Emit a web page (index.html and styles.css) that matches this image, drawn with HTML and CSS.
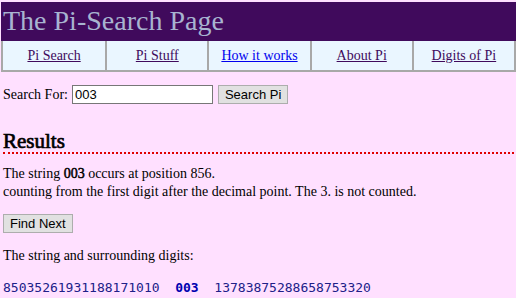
FILE: index.html
```html
<!DOCTYPE html>
<html lang="en">
  <head>
    <meta charset="UTF-8" />
    <title>The Pi-Search Page</title>
    <link rel="stylesheet" href="styles.css">
  </head>
  <body>
    <div class="header">The Pi-Search Page</div>

    <div class="nav">
      <a class="nav-item visited" href="#">Pi Search</a>
      <a class="nav-item visited" href="#">Pi Stuff</a>
      <a class="nav-item" href="#">How it works</a>
      <a class="nav-item visited" href="#">About Pi</a>
      <a class="nav-item visited" href="#">Digits of Pi</a>
    </div>

    <div class="content">
      <form class="search-form">
        <label for="q">Search For:</label>
        <input id="q" class="search-input" type="text" value="003" />
        <button type="button" class="btn">Search Pi</button>
      </form>

      <h2 class="results-title">Results</h2>

      <p class="result-text">
        The string <b>003</b> occurs at position 856.<br />
        counting from the first digit after the decimal point. The 3. is not counted.
      </p>

      <button type="button" class="btn find-btn">Find Next</button>

      <p class="result-text surround">The string and surrounding digits:</p>

      <pre class="digits">85035261931188171010  <b>003</b>  13783875288658753320</pre>
    </div>
  </body>
</html>
```

FILE: styles.css
```css
body {
  margin: 2px 0 0 1px;
  background-color: #ffe0ff;
  font-family: "Liberation Serif", "Times New Roman", serif;
  font-size: 14px;
  color: #000;
}

.header {
  background-color: #400a5c;
  color: #a8b4d0;
  font-size: 28px;
  height: 39px;
  line-height: 38px;
  padding-left: 2px;
}

.nav {
  display: grid;
  grid-template-columns: repeat(5, 1fr);
  background-color: #eaf6ff;
  border: 2px solid #a8a8a8;
  border-top: none;
  height: 29px;
}

.nav-item {
  display: flex;
  align-items: center;
  justify-content: center;
  color: #0000ee;
  font-size: 14px;
  border-left: 2px solid #a8a8a8;
}

.nav-item:first-child {
  border-left: none;
}

.nav-item.visited {
  color: #400a5c;
}

.content {
  padding: 13px 2px 0 2px;
}

.search-form {
  display: flex;
  align-items: center;
  gap: 4px;
  margin: 0;
}

.search-input {
  width: 135px;
  height: 15px;
  padding: 1px 2px;
  border: 1px solid #777;
  font-family: "Liberation Sans", Arial, sans-serif;
  font-size: 13px;
  margin-right: 1px;
}

.btn {
  font-family: "Liberation Sans", Arial, sans-serif;
  font-size: 13px;
  background-color: #e1e1e1;
  border: 1px solid #adadad;
  padding: 1px 6px;
  height: 19px;
}

.results-title {
  font-size: 21px;
  font-weight: normal;
  -webkit-text-stroke: 0.7px #000;
  margin: 26px 0 0 0;
  line-height: 22px;
  padding-bottom: 0;
  border-bottom: 2px dotted #e00000;
}

.result-text {
  margin: 11px 0 13px 0;
  line-height: 18px;
}

.result-text.surround {
  margin-top: 14px;
}

.result-text b {
  font-weight: normal;
  -webkit-text-stroke: 0.5px #000;
}

.find-btn {
  margin: 0;
}

.digits {
  font-family: "DejaVu Sans Mono", monospace;
  font-size: 13px;
  color: #202088;
  margin: 15px 0 0 0;
}

.digits b {
  color: #0000b0;
}
```
